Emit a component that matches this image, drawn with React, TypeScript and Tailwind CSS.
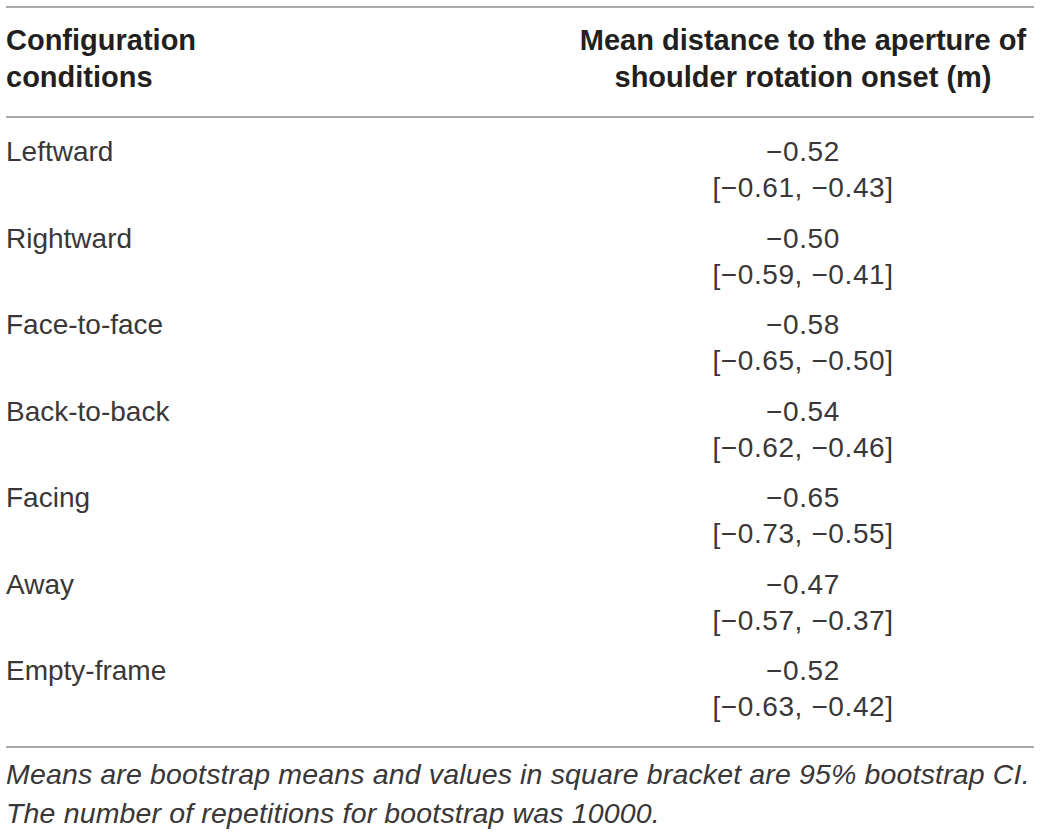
const rows = [
  { name: 'Leftward', mean: '−0.52', ci: '[−0.61, −0.43]' },
  { name: 'Rightward', mean: '−0.50', ci: '[−0.59, −0.41]' },
  { name: 'Face-to-face', mean: '−0.58', ci: '[−0.65, −0.50]' },
  { name: 'Back-to-back', mean: '−0.54', ci: '[−0.62, −0.46]' },
  { name: 'Facing', mean: '−0.65', ci: '[−0.73, −0.55]' },
  { name: 'Away', mean: '−0.47', ci: '[−0.57, −0.37]' },
  { name: 'Empty-frame', mean: '−0.52', ci: '[−0.63, −0.42]' },
];

export default function App() {
  return (
    <div
      className="w-[1040px] h-[834px] bg-white px-[6px] pt-[6px] text-[#231f20]"
      style={{ fontFamily: '"Liberation Sans", Arial, Helvetica, sans-serif' }}
    >
      {/* Header */}
      <div className="flex border-t-2 border-b-2 border-[#a7a9ac] pt-[13.5px] pb-[20.5px] text-[29px] leading-[37px] font-bold">
        <div className="w-[566px]">
          Configuration
          <br />
          conditions
        </div>
        <div className="flex-1 text-center">
          Mean distance to the aperture of
          <br />
          shoulder rotation onset (m)
        </div>
      </div>

      {/* Body */}
      <div className="flex flex-col pt-[8.75px] pb-[13.75px] text-[28px] leading-[36px] text-[#3a3738]">
        {rows.map((r) => (
          <div key={r.name} className="flex py-[7.25px]">
            <div className="w-[566px]">{r.name}</div>
            <div className="flex-1 text-center tracking-[0.6px]">
              <div>{r.mean}</div>
              <div>{r.ci}</div>
            </div>
          </div>
        ))}
      </div>

      {/* Footnote */}
      <div className="border-t-2 border-[#a7a9ac] pt-[6.5px] text-[28.5px] leading-[39px] italic whitespace-nowrap tracking-[0.15px] text-[#3a3738]">
        Means are bootstrap means and values in square bracket are 95% bootstrap CI.
        <br />
        The number of repetitions for bootstrap was 10000.
      </div>
    </div>
  );
}
